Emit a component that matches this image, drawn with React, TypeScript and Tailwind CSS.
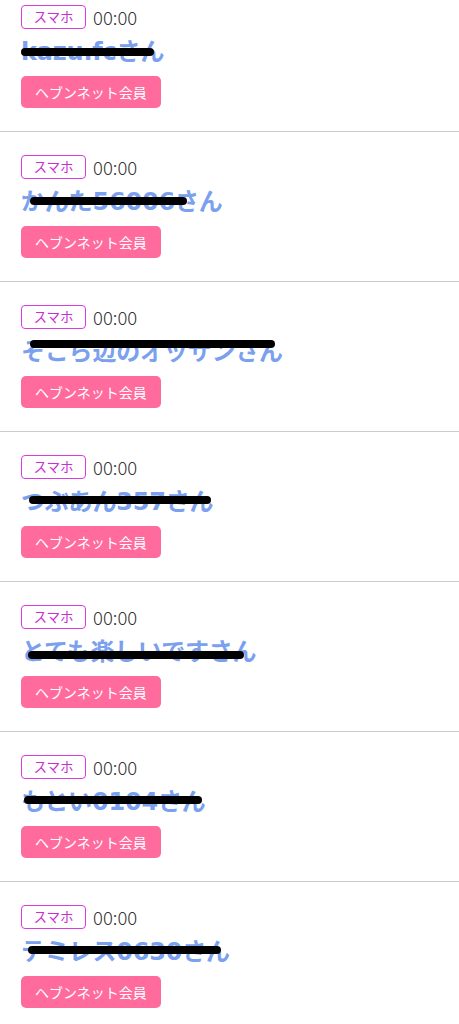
import React from 'react';

interface Visitor {
  name: string;
  // redaction stroke: left, width, top (px relative to name line)
  mark: [number, number, number];
}

const visitors: Visitor[] = [
  { name: 'kazu.fc', mark: [0, 133, 10] },
  { name: 'かんた56006', mark: [9, 157, 9] },
  { name: 'そこら辺のオッサン', mark: [9, 245, 2] },
  { name: 'つぶあん357', mark: [8, 182, 8] },
  { name: 'とても楽しいです', mark: [7, 216, 13] },
  { name: 'もとい0104', mark: [3, 178, 8] },
  { name: 'テミレス0630', mark: [7, 193, 8] },
];

const font = { fontFamily: '"Noto Sans CJK JP", "Noto Sans", sans-serif' };
const nameFont = { fontFamily: '"DejaVu Sans", "Noto Sans CJK JP", sans-serif' };

const VisitorRow: React.FC<{ v: Visitor }> = ({ v }) => (
  <div className="border-b border-[#cccccc] px-[21px] pt-[23px] pb-[23px]">
    <div className="flex h-6 items-center gap-[7px]">
      <span className="flex h-6 w-[65px] items-center justify-center rounded-[4px] border-[1.5px] border-[#d93be0] text-[13.5px] leading-none text-[#c92fd2]">
        スマホ
      </span>
      <span className="text-[18.5px] font-light leading-none text-[#333333]">00:00</span>
    </div>
    <div className="mt-[9px] h-[28px]">
      <span
        className="relative inline-block text-[24px] font-bold leading-[28px] tracking-[-0.2px] text-[#7aa0ee]"
        style={nameFont}
      >
        {v.name}さん
        <span
          className="absolute h-[8px] rounded-full bg-black"
          style={{ left: v.mark[0], width: v.mark[1], top: v.mark[2] }}
        />
      </span>
    </div>
    <button className="mt-[10px] flex h-8 items-center rounded-[5px] bg-[#ff6b9c] px-[14px] text-[14px] leading-none text-white">
      ヘブンネット会員
    </button>
  </div>
);

export default function App() {
  return (
    <div className="min-h-screen overflow-hidden bg-white" style={font}>
      <div className="-mt-[18px]">
        {visitors.map((v, i) => (
          <VisitorRow key={i} v={v} />
        ))}
      </div>
    </div>
  );
}
